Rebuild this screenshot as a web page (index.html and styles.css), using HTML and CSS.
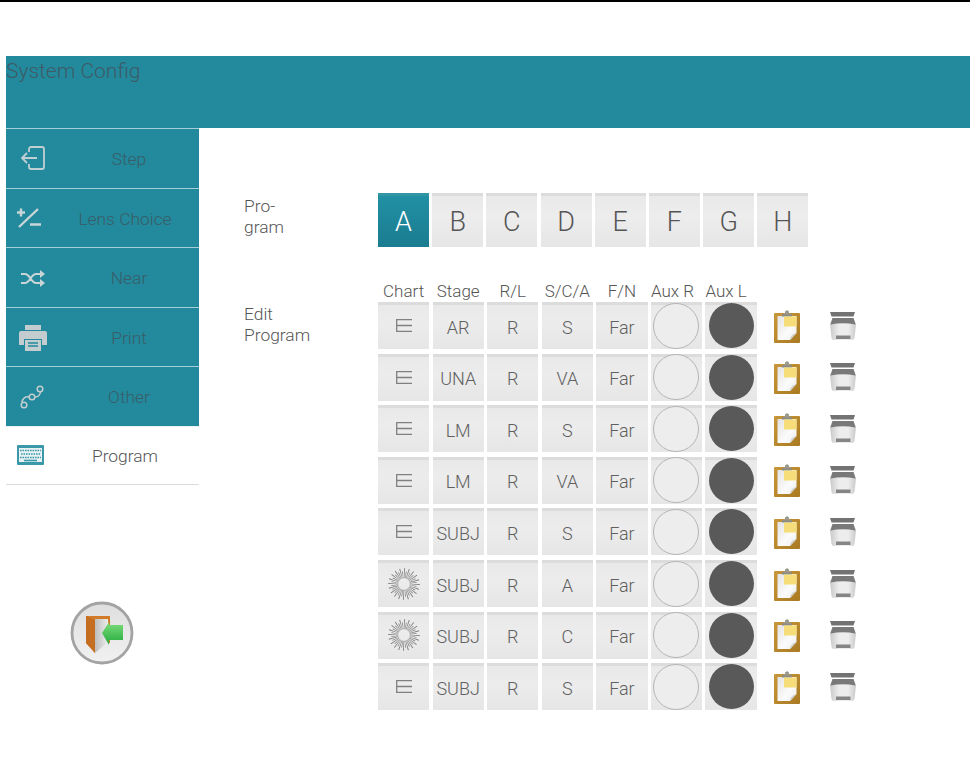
FILE: index.html
```html
<!DOCTYPE html>
<html lang="en">
<head>
<meta charset="utf-8">
<title>System Config</title>
<link rel="stylesheet" href="styles.css">
</head>
<body>
<svg class="defs" width="0" height="0" aria-hidden="true">
  <defs>
    <linearGradient id="g-board" x1="0" y1="0" x2="1" y2="1"><stop offset="0" stop-color="#c9973a"/><stop offset="1" stop-color="#a97a22"/></linearGradient>
    <linearGradient id="g-paper" x1="0" y1="0" x2="1" y2="1"><stop offset="0" stop-color="#e2e2e2"/><stop offset=".6" stop-color="#fbfbfb"/><stop offset="1" stop-color="#ececec"/></linearGradient>
    <linearGradient id="g-body" x1="0" y1="0" x2="1" y2="0"><stop offset="0" stop-color="#c9c9c9"/><stop offset=".35" stop-color="#ededed"/><stop offset=".7" stop-color="#ededed"/><stop offset="1" stop-color="#c9c9c9"/></linearGradient>
    <linearGradient id="g-btn" x1="0" y1="0" x2="0" y2="1"><stop offset="0" stop-color="#dedede"/><stop offset="1" stop-color="#f1f1f1"/></linearGradient>
    <linearGradient id="g-door" x1="0" y1="0" x2="1" y2="0"><stop offset="0" stop-color="#bdbdbd"/><stop offset="1" stop-color="#ececec"/></linearGradient>
    <linearGradient id="g-arrow" x1="0" y1="0" x2="0" y2="1"><stop offset="0" stop-color="#7ede7c"/><stop offset="1" stop-color="#22a93c"/></linearGradient>
    <symbol id="i-e" viewBox="0 0 16 13">
      <path d="M16 .7H.7V12.300H16M.7 6.500H16" fill="none" stroke="#808080" stroke-width="1.300"/>
    </symbol>
    <symbol id="i-sun" viewBox="0 0 32 32">
      <circle cx="16" cy="16" r="11" fill="none" stroke="#7a7a7a" stroke-width="9.500" pathLength="20" stroke-dasharray=".2 .8"/>
      <circle cx="16" cy="16" r="9.500" fill="none" stroke="#7a7a7a" stroke-width="6.500" pathLength="20" stroke-dasharray=".2 .8" stroke-dashoffset="-.5"/>
      <circle cx="16" cy="16" r="6.300" fill="none" stroke="#999" stroke-width=".6"/>
    </symbol>
    <symbol id="i-clip" viewBox="0 0 30 34">
      <rect x="2" y="4" width="26" height="30" rx="1" fill="url(#g-board)"/>
      <path d="M5.500 7H24.500V24L18 31H5.500Z" fill="url(#g-paper)"/>
      <path d="M24.500 24L18 31C18.500 27 20.500 25 24.500 24Z" fill="#d2d2d2"/>
      <path d="M10 5H20V7.500H10Z" fill="#8d8a80"/>
      <path d="M13 4A2 2 0 0 1 17 2.800V4L19 5.500H11Z" fill="#9b988c"/>
      <rect x="12" y="7.500" width="12.500" height="10" fill="#f6dd79"/>
    </symbol>
    <symbol id="i-bin" viewBox="0 0 28 30">
      <path d="M1 1H26L24.500 5.500H2.500Z" fill="#737373"/>
      <path d="M1 13L3.500 7H24.500L27 13L25.500 27Q25 29 23 29H5Q3 29 2.500 27Z" fill="url(#g-body)"/>
      <path d="M1.500 13.500L3.500 7H24.500L26.500 13.500Q14 11 1.500 13.500Z" fill="#797979"/>
      <rect x="7" y="24.500" width="14.500" height="3.500" fill="#858585"/>
    </symbol>
  </defs>
</svg>

<div class="topline"></div>
<header class="title-bar">System Config</header>

<div class="layout">
  <nav class="sidebar">
    <a class="nav-item">
      <svg class="nav-icon" viewBox="0 0 32 32"><path d="M13 10V7a2 2 0 0 1 2-2h11a2 2 0 0 1 2 2v18a2 2 0 0 1-2 2H15a2 2 0 0 1-2-2v-3M21 16H6M11 11l-5 5 5 5" fill="none" stroke="#c0cfd2" stroke-width="1.800"/></svg>
      <span class="nav-label">Step</span>
    </a>
    <a class="nav-item">
      <svg class="nav-icon" viewBox="0 0 32 32"><path d="M1 10.500H9M5 6.500V14.500M3 25L22 7M14 22.500H25" fill="none" stroke="#c9d5d7" stroke-width="2.400"/></svg>
      <span class="nav-label shift">Lens Choice</span>
    </a>
    <a class="nav-item">
      <svg class="nav-icon" viewBox="0 0 32 32"><path d="M5 13h4c5 0 6 9 11 9h6M5 22h4c5 0 6-9 11-9h6" fill="none" stroke="#c9d5d7" stroke-width="2.200"/><path d="M24 9l5 4-5 4zM24 18l5 4-5 4z" fill="#c9d5d7"/></svg>
      <span class="nav-label">Near</span>
    </a>
    <a class="nav-item">
      <svg class="nav-icon" viewBox="0 0 32 32"><path d="M9 4H25V9H9Z" fill="#c3cdcf"/><path d="M5 10H29Q31 10 31 12V24H26V18H8V24H3V12Q3 10 5 10Z" fill="#c3cdcf"/><path d="M9 19H25V30H9Z" fill="#c3cdcf"/><path d="M12 22H22M12 25H22" stroke="#228a9c" stroke-width="1.400"/></svg>
      <span class="nav-label">Print</span>
    </a>
    <a class="nav-item">
      <svg class="nav-icon" viewBox="0 0 32 32"><circle cx="8" cy="25" r="2.800" fill="none" stroke="#c3cdcf" stroke-width="1.500"/><circle cx="16" cy="17" r="2.800" fill="none" stroke="#c3cdcf" stroke-width="1.500"/><circle cx="24" cy="9" r="2.800" fill="none" stroke="#c3cdcf" stroke-width="1.500"/><path d="M6 22.500C6 19 9 16 13.300 17M19 17C22 17 24 15 24.500 12" fill="none" stroke="#c3cdcf" stroke-width="1.500"/></svg>
      <span class="nav-label">Other</span>
    </a>
    <a class="nav-item is-current">
      <svg class="nav-icon" viewBox="0 0 32 32"><rect x="1" y="6" width="27" height="20" rx="1" fill="#3b98a8"/><rect x="3" y="9" width="23" height="14" fill="#e8f2f4"/><path d="M4 11.500H25M5 15H25M4 18.500H25" stroke="#3b98a8" stroke-width="1.500" stroke-dasharray="1.600 .9"/><path d="M8 21.500H21" stroke="#3b98a8" stroke-width="1.600"/></svg>
      <span class="nav-label shift">Program</span>
    </a>
    <button class="exit-btn" aria-label="Exit">
      <svg viewBox="0 0 64 64" width="64" height="64">
        <circle cx="32" cy="32" r="30" fill="url(#g-btn)" stroke="#a3a3a3" stroke-width="2.800"/>
        <path d="M16 15H40V42H38V18H25V52L16 42Z" fill="#d27c2a"/>
        <path d="M25 18H38V41L25 52Z" fill="url(#g-door)"/>
        <path d="M16 15L25 19V52L16 42Z" fill="#c56d20"/>
        <path d="M32 32L39 21V24H53V39H39V44Z" fill="url(#g-arrow)"/>
      </svg>
    </button>
  </nav>

  <main class="content">
    <section class="program-row">
      <div class="row-label">Pro-<br>gram</div>
      <div class="letters">
        <button class="letter is-active">A</button>
        <button class="letter">B</button>
        <button class="letter">C</button>
        <button class="letter">D</button>
        <button class="letter">E</button>
        <button class="letter">F</button>
        <button class="letter">G</button>
        <button class="letter">H</button>
      </div>
    </section>

    <section class="edit-row">
      <div class="row-label edit-label">Edit<br>Program</div>
      <div class="table">
        <div class="th">Chart</div><div class="th">Stage</div><div class="th">R/L</div><div class="th">S/C/A</div><div class="th">F/N</div><div class="th th-aux">Aux R</div><div class="th th-aux">Aux L</div><div></div><div></div>

        <div class="cell"><svg class="ic-e"><use href="#i-e"/></svg></div><div class="cell">AR</div><div class="cell">R</div><div class="cell">S</div><div class="cell">Far</div><div class="cell"><span class="aux-r"></span></div><div class="cell"><span class="aux-l"></span></div><div class="tool"><svg class="ic-clip"><use href="#i-clip"/></svg></div><div class="tool"><svg class="ic-bin"><use href="#i-bin"/></svg></div>

        <div class="cell"><svg class="ic-e"><use href="#i-e"/></svg></div><div class="cell">UNA</div><div class="cell">R</div><div class="cell">VA</div><div class="cell">Far</div><div class="cell"><span class="aux-r"></span></div><div class="cell"><span class="aux-l"></span></div><div class="tool"><svg class="ic-clip"><use href="#i-clip"/></svg></div><div class="tool"><svg class="ic-bin"><use href="#i-bin"/></svg></div>

        <div class="cell"><svg class="ic-e"><use href="#i-e"/></svg></div><div class="cell">LM</div><div class="cell">R</div><div class="cell">S</div><div class="cell">Far</div><div class="cell"><span class="aux-r"></span></div><div class="cell"><span class="aux-l"></span></div><div class="tool"><svg class="ic-clip"><use href="#i-clip"/></svg></div><div class="tool"><svg class="ic-bin"><use href="#i-bin"/></svg></div>

        <div class="cell"><svg class="ic-e"><use href="#i-e"/></svg></div><div class="cell">LM</div><div class="cell">R</div><div class="cell">VA</div><div class="cell">Far</div><div class="cell"><span class="aux-r"></span></div><div class="cell"><span class="aux-l"></span></div><div class="tool"><svg class="ic-clip"><use href="#i-clip"/></svg></div><div class="tool"><svg class="ic-bin"><use href="#i-bin"/></svg></div>

        <div class="cell"><svg class="ic-e"><use href="#i-e"/></svg></div><div class="cell">SUBJ</div><div class="cell">R</div><div class="cell">S</div><div class="cell">Far</div><div class="cell"><span class="aux-r"></span></div><div class="cell"><span class="aux-l"></span></div><div class="tool"><svg class="ic-clip"><use href="#i-clip"/></svg></div><div class="tool"><svg class="ic-bin"><use href="#i-bin"/></svg></div>

        <div class="cell"><svg class="ic-sun"><use href="#i-sun"/></svg></div><div class="cell">SUBJ</div><div class="cell">R</div><div class="cell">A</div><div class="cell">Far</div><div class="cell"><span class="aux-r"></span></div><div class="cell"><span class="aux-l"></span></div><div class="tool"><svg class="ic-clip"><use href="#i-clip"/></svg></div><div class="tool"><svg class="ic-bin"><use href="#i-bin"/></svg></div>

        <div class="cell"><svg class="ic-sun"><use href="#i-sun"/></svg></div><div class="cell">SUBJ</div><div class="cell">R</div><div class="cell">C</div><div class="cell">Far</div><div class="cell"><span class="aux-r"></span></div><div class="cell"><span class="aux-l"></span></div><div class="tool"><svg class="ic-clip"><use href="#i-clip"/></svg></div><div class="tool"><svg class="ic-bin"><use href="#i-bin"/></svg></div>

        <div class="cell"><svg class="ic-e"><use href="#i-e"/></svg></div><div class="cell">SUBJ</div><div class="cell">R</div><div class="cell">S</div><div class="cell">Far</div><div class="cell"><span class="aux-r"></span></div><div class="cell"><span class="aux-l"></span></div><div class="tool"><svg class="ic-clip"><use href="#i-clip"/></svg></div><div class="tool"><svg class="ic-bin"><use href="#i-bin"/></svg></div>
      </div>
    </section>
  </main>
</div>
</body>
</html>
```

FILE: styles.css
```css
* { box-sizing: border-box; }
html, body { margin: 0; padding: 0; }
body {
  background: #fff;
  font-family: Roboto, "Liberation Sans", sans-serif;
  font-weight: 300;
  color: #505050;
  overflow: hidden;
  height: 779px;
}
.defs { position: absolute; }
.topline { height: 2px; background: #000; }

.title-bar {
  margin: 54px 0 0 6px;
  height: 72px;
  padding-top: 2px;
  background: #228a9c;
  color: #3f5a68;
  font-size: 21px;
  line-height: 27px;
}

.layout { display: flex; }

.sidebar { width: 193px; margin-left: 6px; flex: none; display: flex; flex-direction: column; }
.nav-item {
  display: flex;
  align-items: center;
  height: 59.5px;
  background: #228a9c;
  border-top: 1px solid #a4cdd5;
  color: #3a5c68;
  font-size: 17.4px;
}
.nav-icon { width: 32px; height: 32px; margin-left: 10px; flex: none; }
.nav-label { width: 134px; margin-left: 14px; padding-top: 2px; text-align: center; }
.nav-label.shift { padding-right: 8px; }
.nav-item.is-current {
  background: #fff;
  border-top: 1px solid #e8f2f4;
  border-bottom: 1px solid #dcdcdc;
  color: #555;
}

.exit-btn {
  width: 64px;
  height: 64px;
  margin: 116px 0 0 64px;
  padding: 0;
  border: 0;
  background: none;
}
.exit-btn svg { display: block; }

.content { flex: 1; padding: 65px 0 0 45px; }
.program-row, .edit-row { display: flex; }
.row-label { width: 134px; flex: none; font-size: 17.4px; line-height: 21px; color: #555; }
.program-row .row-label { padding-top: 3px; }
.edit-label { padding-top: 22px; }

.letters { display: flex; gap: 3.2px; }
.letter {
  width: 51px;
  height: 54px;
  padding: 0;
  border: 0;
  border-top: 3px solid #dcdcdc;
  background: linear-gradient(#e9e9e9, #ededed 40%, #e6e6e6);
  color: #555;
  font: 300 27px Roboto, "Liberation Sans", sans-serif;
}
.letter.is-active {
  border-top-color: #3295a6;
  background: linear-gradient(#2190a4, #1b7c90);
  color: #fff;
}

.edit-row { margin-top: 35px; }
.table {
  display: grid;
  grid-template-columns: repeat(7, 51.2px) 54px 52px;
  grid-template-rows: 15.5px repeat(8, 47px);
  column-gap: 3.4px;
  row-gap: 4.6px;
}
.th { font-size: 17px; line-height: 18px; text-align: center; white-space: nowrap; color: #555; margin: 0 -4px; }
.th-aux { text-align: left; margin: 0; }
.cell {
  display: flex;
  align-items: center;
  justify-content: center;
  border-top: 3px solid #dcdcdc;
  background: linear-gradient(#e9e9e9, #ececec 40%, #e6e6e6);
  font-size: 18px;
  color: #606060;
}
.tool { display: flex; align-items: center; justify-content: center; }
.ic-e { width: 16px; height: 13px; margin-top: -3px; }
.ic-sun { width: 32px; height: 32px; margin-top: -3px; }
.ic-clip { width: 30px; height: 34px; }
.ic-bin { width: 28px; height: 30px; }
.aux-r, .aux-l { display: block; width: 46px; height: 46px; border-radius: 50%; margin-top: -3px; }
.aux-r { border: 1.5px solid #b5b5b5; background: #ededed; }
.aux-l { background: #595959; width: 45px; height: 45px; }
```
